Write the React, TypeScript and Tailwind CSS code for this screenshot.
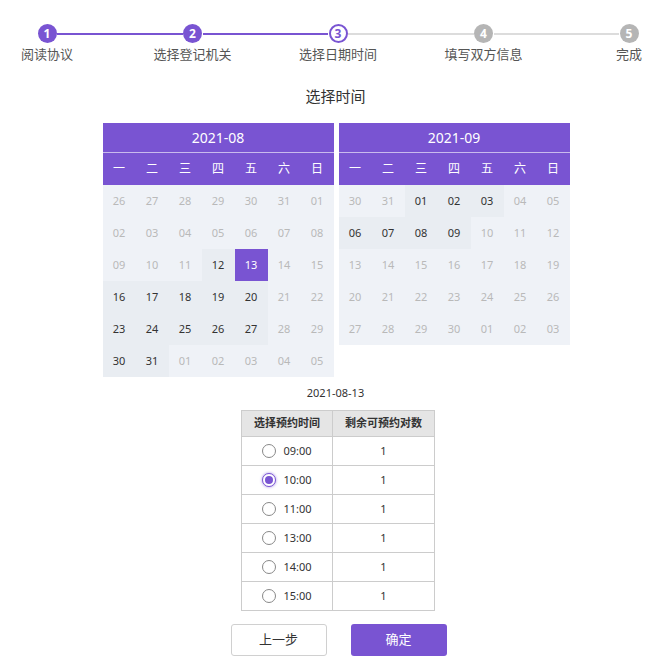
import React from "react";

const steps = ["阅读协议", "选择登记机关", "选择日期时间", "填写双方信息", "完成"];
const weekdays = ["一", "二", "三", "四", "五", "六", "日"];

type Day = { d: string; ok?: boolean; sel?: boolean };

function monthRows(start: number, prevLen: number, len: number, rows: number, okDays: number[], sel?: number): Day[] {
  const out: Day[] = [];
  // start = day of previous month in top-left cell
  let day = start;
  let phase = start === 1 ? 1 : 0;
  for (let i = 0; i < rows * 7; i++) {
    const inMonth = phase === 1;
    out.push({
      d: String(day).padStart(2, "0"),
      ok: inMonth && okDays.includes(day),
      sel: inMonth && day === sel,
    });
    day++;
    if (phase === 0 && day > prevLen) {
      day = 1;
      phase = 1;
    } else if (phase === 1 && day > len) {
      day = 1;
      phase = 2;
    }
  }
  return out;
}

const aug = monthRows(26, 31, 31, 6, [12, 13, 16, 17, 18, 19, 20, 23, 24, 25, 26, 27, 30, 31], 13);
const sep = monthRows(30, 31, 30, 5, [1, 2, 3, 6, 7, 8, 9]);

const slots = ["09:00", "10:00", "11:00", "13:00", "14:00", "15:00"];

function Stepper() {
  return (
    <div className="ml-[7px] flex w-[662px] items-start pt-[24px]">
      {steps.map((label, i) => (
        <React.Fragment key={label}>
          {i > 0 && (
            <div
              className={`-mx-[30px] mt-[8.5px] h-[2px] flex-1 ${i <= 2 ? "bg-[#7954d2]" : "bg-[#dcdcdc]"}`}
            />
          )}
          <div className="flex w-[80px] shrink-0 flex-col items-center">
            <StepDot n={i + 1} state={i < 2 ? "done" : i === 2 ? "active" : "todo"} />
            <div className="mt-[2px] whitespace-nowrap text-[13px] leading-[18px] text-[#555]">{label}</div>
          </div>
        </React.Fragment>
      ))}
    </div>
  );
}

function StepDot({ n, state }: { n: number; state: "done" | "active" | "todo" }) {
  const cls =
    state === "done"
      ? "bg-[#7954d2] text-white"
      : state === "active"
        ? "bg-white border-2 border-[#7954d2] text-[#7954d2]"
        : "bg-[#b5b5b5] text-white";
  return (
    <div
      className={`relative z-10 flex h-[19px] w-[19px] items-center justify-center rounded-full text-[12px] font-bold leading-none ${cls}`}
    >
      {n}
    </div>
  );
}

function Calendar({ title, days }: { title: string; days: Day[] }) {
  return (
    <div className="w-[231px]">
      <div className="bg-[#7954d2] text-white">
        <div className="flex h-[30px] items-center justify-center border-b border-white/60 text-[14px]">{title}</div>
        <div className="grid h-[32px] grid-cols-7 items-center text-center text-[12px]">
          {weekdays.map((w) => (
            <div key={w}>{w}</div>
          ))}
        </div>
      </div>
      <div className="grid grid-cols-7 bg-[#eff2f7] text-[11px]">
        {days.map((day, i) => (
          <div
            key={i}
            className={`flex h-[32px] items-center justify-center ${
              day.sel
                ? "bg-[#7954d2] text-white"
                : day.ok
                  ? "bg-[#e9edf2] text-[#333]"
                  : "text-[#b9b9b9]"
            }`}
          >
            {day.d}
          </div>
        ))}
      </div>
    </div>
  );
}

function Radio({ on }: { on?: boolean }) {
  return (
    <span
      className={`flex h-[14px] w-[14px] items-center justify-center rounded-full border bg-white ${
        on ? "border-[#7954d2] shadow-[0_0_3px_#a58ce6]" : "border-[#888]"
      }`}
    >
      {on && <span className="h-[8px] w-[8px] rounded-full bg-[#7954d2]" />}
    </span>
  );
}

export default function App() {
  return (
    <div
      className="h-[667px] w-[671px] bg-white text-[#333]"
      style={{ fontFamily: '"Noto Sans", "Noto Sans CJK SC", sans-serif' }}
    >
      <Stepper />

      <div className="mt-[22px] text-center text-[15px] leading-[22px] text-[#333]">选择时间</div>

      <div className="mt-[16px] flex items-start justify-center gap-[5px] pl-[1px]">
        <Calendar title="2021-08" days={aug} />
        <Calendar title="2021-09" days={sep} />
      </div>

      <div className="mt-[8px] text-center text-[11px] leading-[16px] text-[#333]">2021-08-13</div>

      <div className="mt-[9px] flex justify-center pl-[5px]">
        <table className="border-collapse text-[11px] text-[#333]">
          <thead>
            <tr className="h-[26px] bg-[#e5e5e5]">
              <th className="w-[91px] border border-[#ccc] font-bold">选择预约时间</th>
              <th className="w-[102px] border border-[#ccc] font-bold">剩余可预约对数</th>
            </tr>
          </thead>
          <tbody>
            {slots.map((s) => (
              <tr key={s} className="h-[29px]">
                <td className="border border-[#ccc]">
                  <div className="flex items-center justify-center gap-[7px]">
                    <Radio on={s === "10:00"} />
                    <span>{s}</span>
                  </div>
                </td>
                <td className="border border-[#ccc] text-center">1</td>
              </tr>
            ))}
          </tbody>
        </table>
      </div>

      <div className="mt-[13px] flex justify-center gap-[24px] pl-[6px]">
        <button className="h-[32px] w-[96px] rounded-[3px] border border-[#d0d0d0] bg-white text-[13px] text-[#333]">
          上一步
        </button>
        <button className="h-[32px] w-[96px] rounded-[3px] bg-[#7954d2] text-[13px] text-white">确定</button>
      </div>
    </div>
  );
}
